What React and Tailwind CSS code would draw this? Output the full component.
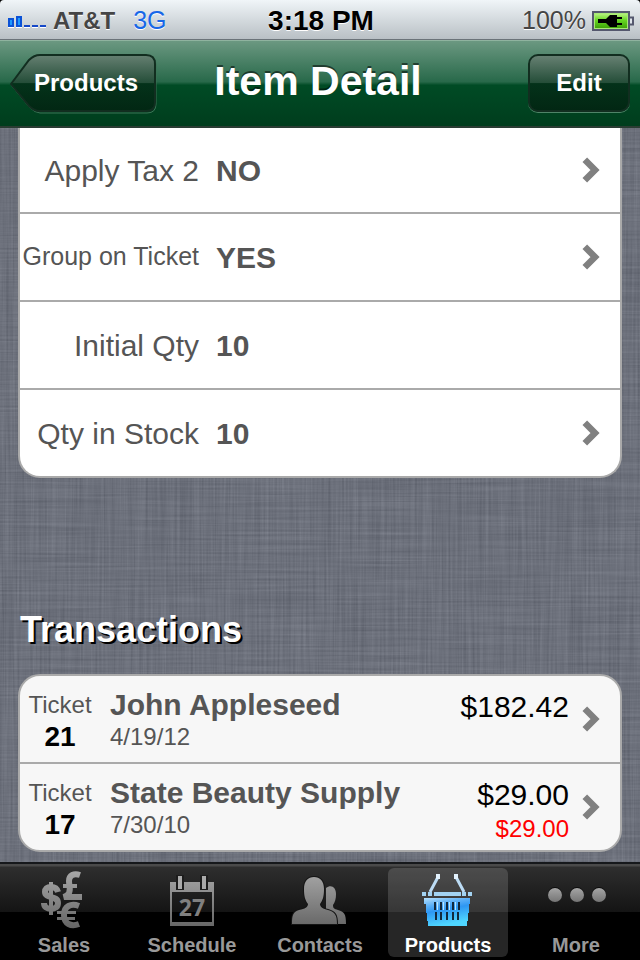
import React, { useState } from 'react';
import clsx from 'clsx';

const details = [
  { label: 'Apply Tax 2', value: 'NO', link: true },
  { label: 'Group on Ticket', value: 'YES', link: true, small: true },
  { label: 'Initial Qty', value: '10' },
  { label: 'Qty in Stock', value: '10', link: true }
];

const transactions = [
  { ticket: 21, name: 'John Appleseed', date: '4/19/12', total: '$182.42' },
  { ticket: 17, name: 'State Beauty Supply', date: '7/30/10', total: '$29.00', due: '$29.00' }
];

const Chevron = () => (
  <svg width="18" height="26" viewBox="0 0 18 26" className="shrink-0" aria-hidden="true">
    <path d="M2.8 2.8 L13 13 L2.8 23.2" fill="none" stroke="#808080" strokeWidth="6.5" />
  </svg>
);

// woven background: one layer of horizontal threads, one of vertical
const Linen = () => (
  <svg className="absolute inset-0 w-full h-full" aria-hidden="true">
    <filter id="weft" x="0" y="0" width="100%" height="100%" colorInterpolationFilters="sRGB">
      <feTurbulence type="fractalNoise" baseFrequency="0.009 0.45" numOctaves="3" seed="4" />
      <feColorMatrix values="0.2 0 0 0 0.325  0.2 0 0 0 0.341  0.2 0 0 0 0.384  0 0 0 0 1" />
    </filter>
    <filter id="warp" x="0" y="0" width="100%" height="100%" colorInterpolationFilters="sRGB">
      <feTurbulence type="fractalNoise" baseFrequency="0.45 0.009" numOctaves="3" seed="9" />
      <feColorMatrix values="0.2 0 0 0 0.325  0.2 0 0 0 0.341  0.2 0 0 0 0.384  0 0 0 0 1" />
    </filter>
    <rect width="100%" height="100%" filter="url(#weft)" />
    <rect width="100%" height="100%" filter="url(#warp)" opacity="0.5" />
  </svg>
);

const StatusBar = () => (
  <div className="grid grid-cols-3 items-center h-10 pl-2 pr-[6px] rounded-t-[4px] border-b border-[#6b7379] bg-linear-to-b from-[#f0f5f8] to-[#b9c0c5] text-[#454545] text-[25px] [text-shadow:0_1px_0_#fff]">
    <div className="flex items-center gap-[6px]">
      <svg width="39" height="13" viewBox="0 0 39 13" aria-label="Signal">
        <path d="M0 12h39" stroke="#fff" strokeWidth="2" strokeDasharray="6 2" />
        <path d="M1 4h4v7H1z M9 2h4v9H9z" fill="#1d9bff" stroke="#0b52d6" strokeWidth="2" />
        <path d="M16 11h6 M24 11h6 M32 11h6" stroke="#1548c8" strokeWidth="2" />
      </svg>
      <span className="text-2xl font-bold">AT&amp;T</span>
      <span className="ml-3 text-[#1767e8]">3G</span>
    </div>
    <span className="text-center text-[28px] font-bold text-black">3:18 PM</span>
    <div className="flex items-center justify-end gap-[6px]">
      <span>100%</span>
      <svg width="42" height="20" viewBox="0 0 42 20" aria-label="Charging">
        <defs>
          <linearGradient id="charge" x1="0" y1="0" x2="0" y2="1">
            <stop offset="0" stopColor="#b4f07c" />
            <stop offset="0.45" stopColor="#66d622" />
            <stop offset="1" stopColor="#3fa30a" />
          </linearGradient>
        </defs>
        <rect x="1" y="1" width="36" height="18" fill="#a8e878" stroke="#55586e" strokeWidth="2" />
        <rect x="3" y="3" width="32" height="14" fill="url(#charge)" />
        <path d="M38 6.5h3v7h-3" fill="#dfe4ea" stroke="#55586e" strokeWidth="2" />
        <path d="M6 8h8l4-4h7v2h5v2h-5v4h5v2h-5v2h-7l-4-4H6z" fill="#000" />
      </svg>
    </div>
  </div>
);

const NavBar = () => (
  <header className="grid grid-cols-[1fr_auto_1fr] items-center h-[88px] px-[10px] pb-[2px] border-t border-b-2 border-t-[#8fb39f] border-b-black/60 bg-[linear-gradient(to_bottom,#6b9881_0%,#28694a_48%,#004b25_52%,#003d1d_100%)] text-white [text-shadow:0_-2px_0_rgba(0,0,0,0.5)]">
    <button className="relative justify-self-start w-[146px] h-[58px] pl-[24px] pr-[18px] text-2xl font-bold text-center">
      <svg className="absolute inset-0" width="148" height="60" viewBox="0 0 148 60" aria-hidden="true">
        <defs>
          <linearGradient id="back" x1="0" y1="0" x2="0" y2="1">
            <stop offset="0" stopColor="#668072" />
            <stop offset="0.5" stopColor="#244d38" />
            <stop offset="0.51" stopColor="#04321a" />
            <stop offset="1" stopColor="#022713" />
          </linearGradient>
        </defs>
        <path d="M1 31 L19 7 Q25 2 30 2 H137 Q146 2 146 11 V50 Q146 59 137 59 H30 Q25 59 19 53 Z" fill="none" stroke="#3c7256" strokeWidth="1" />
        <path d="M1 30 L19 6 Q24 1 30 1 H136 Q145 1 145 10 V48 Q145 57 136 57 H30 Q24 57 19 52 Z" fill="url(#back)" stroke="#122e20" strokeWidth="2" />
      </svg>
      <span className="relative">Products</span>
    </button>
    <h1 className="pr-1 pb-[3px] text-[41px] leading-none font-bold">Item Detail</h1>
    <button className="justify-self-end w-[102px] h-[58px] rounded-[10px] border-2 border-[#122e20] bg-[linear-gradient(to_bottom,#668072_0%,#244d38_50%,#04321a_51%,#022713_100%)] shadow-[0_1px_0_#4f8468] text-2xl font-bold">
      Edit
    </button>
  </header>
);

const DetailRow = ({ item }) => {
  const Tag = item.link ? 'a' : 'div';
  return (
    <Tag
      href={item.link ? '#' : undefined}
      className="flex items-center h-[88px] first:h-[86px] last:h-[86px] pr-5 text-[30px] text-[#555]"
    >
      <span className={clsx('w-[179px] shrink-0 text-right whitespace-nowrap', item.small && 'text-[25px]')}>{item.label}</span>
      <span className="flex-1 ml-[17px] font-bold">{item.value}</span>
      {item.link && <Chevron />}
    </Tag>
  );
};

const TransactionRow = ({ tx }) => (
  <a href="#" className="flex items-center h-[88px] last:h-[86px] pl-[6px] pr-5 text-[#555]">
    <span className="flex flex-col w-[68px] pt-1 text-center">
      <span className="text-2xl leading-8">Ticket</span>
      <span className="text-[28px] leading-8 font-bold text-black">{tx.ticket}</span>
    </span>
    <span className="flex flex-col flex-1 pt-1 ml-4">
      <span className="text-[30px] leading-8 font-bold">{tx.name}</span>
      <span className="text-2xl leading-8">{tx.date}</span>
    </span>
    <span className="flex flex-col h-[68px] pt-1 mr-[13px] text-right">
      <span className="text-[30px] leading-9 text-black">{tx.total}</span>
      {tx.due && <span className="text-2xl leading-8 text-[#f00]">{tx.due}</span>}
    </span>
    <Chevron />
  </a>
);

const GreyFade = ({ id }) => (
  <linearGradient id={id} gradientUnits="userSpaceOnUse" x1="0" y1="0" x2="0" y2="58">
    <stop offset="0" stopColor="#aaa" />
    <stop offset="1" stopColor="#666" />
  </linearGradient>
);

const SalesIcon = () => (
  <svg width="60" height="60" viewBox="0 0 60 60" fill="none" stroke="url(#salesFade)" strokeWidth="6" aria-hidden="true">
    <defs><GreyFade id="salesFade" /></defs>
    <path d="M24 23c-1-4-4-5-7-5-4 0-6 2-6 5 0 7 13 3 13 11 0 4-3 6-7 6s-7-2-7-6" />
    <path d="M17 13v33" strokeWidth="4" />
    <path d="M46 6c-6-2-11 0-11 6 0 5 2 8 0 12-1 2-3 3-5 4h18" />
    <path d="M29 17h14" strokeWidth="4" />
    <path d="M45 37c-8-3-15 0-15 9s7 12 15 9" />
    <path d="M23 43.500h19 M23 49.500h18" strokeWidth="3" />
  </svg>
);

const ScheduleIcon = () => (
  <svg width="60" height="60" viewBox="0 0 60 60" aria-hidden="true">
    <defs><GreyFade id="scheduleFade" /></defs>
    <path fillRule="evenodd" d="M8 13h44v44H8z M10 23v30h40V23z" fill="url(#scheduleFade)" />
    <path d="M14 6h8v15h-8z M38 6h8v15h-8z" fill="#1c1c1c" />
    <path d="M16 7h4v13h-4z M40 7h4v13h-4z" fill="#aaa" />
    <text x="30" y="47" textAnchor="middle" fontSize="23" fontWeight="700" fontFamily="Open Sans, sans-serif" fill="#808080">27</text>
  </svg>
);

const ContactsIcon = () => (
  <svg width="60" height="60" viewBox="0 0 60 60" fill="url(#contactsFade)" aria-hidden="true">
    <defs><GreyFade id="contactsFade" /></defs>
    <path d="M36 19c5-4 10-1 10 6 0 5-1 8-3 11 0 3 1 4 5 5 6 2 8 3 8 14H36z" />
    <path d="M2 55c0-9 1-12 7-14 6-1 9-3 9-6-3-4-4-8-4-15 0-8 4-12 10-12s10 4 10 12c0 7-1 11-4 15 0 3 3 5 8 6 7 2 9 5 9 14z" stroke="#141414" strokeWidth="2" paintOrder="stroke" />
  </svg>
);

const ProductsIcon = () => (
  <svg width="60" height="60" viewBox="0 0 60 60" aria-hidden="true">
    <defs>
      <linearGradient id="basket" x1="0" y1="0" x2="0.300" y2="1">
        <stop offset="0" stopColor="#b5e0fc" />
        <stop offset="0.300" stopColor="#58aef7" />
        <stop offset="0.500" stopColor="#2e97f3" />
        <stop offset="1" stopColor="#4fd6ff" />
      </linearGradient>
    </defs>
    <path d="M20 8L12 23 M38 8L46 23" stroke="#bcdcf5" strokeWidth="3" />
    <path d="M18 5h4v5h-4z M36 5h4v5h-4z" fill="#e2f1fd" />
    <path d="M4 23h4v4H4z M10 23h4v4h-4z M16 23h27v4H16z M44 23h4v4h-4z M50 23h4v4h-4z" fill="#a3d3f2" />
    <path d="M6 29h46v6h-1v9h-1v8h-1v5H10v-5H9v-8H8v-9H6z" fill="url(#basket)" />
    <path d="M16 33h2v8h-2z M22 33h2v8h-2z M28 33h2v8h-2z M34 33h2v8h-2z M40 33h2v8h-2z M17 43h2v8h-2z M22 43h2v8h-2z M28 43h2v8h-2z M34 43h2v8h-2z M39 43h2v8h-2z" fill="#12283c" />
    <path d="M19 33h1v8h-1z M25 33h1v8h-1z M31 33h1v8h-1z M37 33h1v8h-1z" fill="#b9e6ff" />
  </svg>
);

const MoreIcon = () => (
  <svg width="60" height="60" viewBox="0 0 60 60" aria-hidden="true">
    <defs>
      <linearGradient id="dots" x1="0" y1="0" x2="0" y2="1">
        <stop offset="0" stopColor="#a5a5a5" />
        <stop offset="1" stopColor="#757575" />
      </linearGradient>
    </defs>
    <g fill="#0c0c0c">
      <circle cx="9" cy="25" r="7" />
      <circle cx="31" cy="25" r="7" />
      <circle cx="53" cy="25" r="7" />
    </g>
    <g fill="url(#dots)">
      <circle cx="9" cy="26" r="7" />
      <circle cx="31" cy="26" r="7" />
      <circle cx="53" cy="26" r="7" />
    </g>
  </svg>
);

const tabs = [
  { name: 'Sales', Icon: SalesIcon },
  { name: 'Schedule', Icon: ScheduleIcon },
  { name: 'Contacts', Icon: ContactsIcon },
  { name: 'Products', Icon: ProductsIcon },
  { name: 'More', Icon: MoreIcon }
];

const App = () => {
  const [active, setActive] = useState('Products');

  return (
    <div className="flex flex-col min-h-screen bg-black font-['Liberation_Sans',Arial,sans-serif]">
      <StatusBar />
      <NavBar />

      <main className="relative flex-1 bg-[#6d717c] pb-[10px]">
        <Linen />
        <div className="relative px-[18px]">
          <section className="rounded-b-[22px] border-2 border-t-0 border-[#aaa] bg-white divide-y-2 divide-[#aaa] overflow-hidden">
            {details.map((item) => (
              <DetailRow key={item.label} item={item} />
            ))}
          </section>

          <h2 className="mt-[132px] mb-6 pl-[2px] text-4xl font-bold text-white [text-shadow:2px_2px_0_#000]">Transactions</h2>

          <section className="rounded-[22px] border-2 border-[#aaa] bg-[#f7f7f7] divide-y-2 divide-[#aaa] overflow-hidden">
            {transactions.map((tx) => (
              <TransactionRow key={tx.ticket} tx={tx} />
            ))}
          </section>
        </div>
      </main>

      <nav className="grid grid-cols-5 h-[98px] pt-1 pb-1 border-t-2 border-[#16181b] bg-[linear-gradient(to_bottom,#4a4a4a_0,#4a4a4a_2px,#2e2e2e_3px,#141414_48px,#000_48px)]">
        {tabs.map(({ name, Icon }) => (
          <a
            key={name}
            href="#"
            onClick={() => setActive(name)}
            className={clsx(
              'flex flex-col items-center mx-1 pt-px rounded-md text-xl leading-6 font-bold',
              active === name ? 'bg-white/15 text-white' : 'text-[#999]'
            )}
          >
            <Icon />
            <span className="mt-1">{name}</span>
          </a>
        ))}
      </nav>
    </div>
  );
};

export default App;
